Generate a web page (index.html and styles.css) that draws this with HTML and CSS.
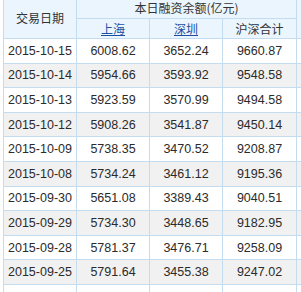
FILE: index.html
```html
<!DOCTYPE html>
<html>
<head>
<meta charset="utf-8">
<link rel="stylesheet" href="styles.css">
</head>
<body>
<div class="frame">
<table class="grid">
  <colgroup>
    <col class="c1"><col class="c2"><col class="c3"><col class="c4"><col class="c5">
  </colgroup>
  <thead>
    <tr class="h1">
      <th rowspan="2">交易日期</th>
      <th colspan="3">本日融资余额(亿元)</th>
      <th rowspan="2"></th>
    </tr>
    <tr class="h2">
      <th><a href="#">上海</a></th>
      <th><a href="#">深圳</a></th>
      <th>沪深合计</th>
    </tr>
  </thead>
  <tbody>
    <tr><td>2015-10-15</td><td>6008.62</td><td>3652.24</td><td>9660.87</td><td></td></tr>
    <tr class="alt"><td>2015-10-14</td><td>5954.66</td><td>3593.92</td><td>9548.58</td><td></td></tr>
    <tr><td>2015-10-13</td><td>5923.59</td><td>3570.99</td><td>9494.58</td><td></td></tr>
    <tr class="alt"><td>2015-10-12</td><td>5908.26</td><td>3541.87</td><td>9450.14</td><td></td></tr>
    <tr><td>2015-10-09</td><td>5738.35</td><td>3470.52</td><td>9208.87</td><td></td></tr>
    <tr class="alt"><td>2015-10-08</td><td>5734.24</td><td>3461.12</td><td>9195.36</td><td></td></tr>
    <tr><td>2015-09-30</td><td>5651.08</td><td>3389.43</td><td>9040.51</td><td></td></tr>
    <tr class="alt"><td>2015-09-29</td><td>5734.30</td><td>3448.65</td><td>9182.95</td><td></td></tr>
    <tr><td>2015-09-28</td><td>5781.37</td><td>3476.71</td><td>9258.09</td><td></td></tr>
    <tr class="alt"><td>2015-09-25</td><td>5791.64</td><td>3455.38</td><td>9247.02</td><td></td></tr>
    <tr><td></td><td></td><td></td><td></td><td></td></tr>
  </tbody>
</table>
</div>
</body>
</html>
```
FILE: styles.css
```css
html, body {
  margin: 0;
  padding: 0;
  background: #ffffff;
}
.frame {
  width: 301px;
  height: 292px;
  overflow: hidden;
  position: relative;
}
.grid {
  border-collapse: collapse;
  table-layout: fixed;
  width: 366px;
  margin-left: 3px;
  margin-top: -3px;
  font-family: "Liberation Sans", Arial, "Noto Sans CJK SC", sans-serif;
  color: #2b2b2b;
}
.c1, .c2, .c3 { width: 73px; }
.c4 { width: 74px; }
.c5 { width: 73px; }
.grid th, .grid td {
  border: 1px solid #c3dcef;
  padding: 0;
  text-align: center;
  white-space: nowrap;
  overflow: hidden;
}
.grid th {
  background: #eaf5fd;
  font-family: "Noto Sans CJK SC", "Liberation Sans", sans-serif;
  font-weight: normal;
  font-size: 12px;
  color: #333333;
  line-height: 14px;
}
.h1 th { height: 20px; }
.h2 th { height: 19px; }
.grid th a {
  color: #1c4f9f;
  text-decoration: underline;
}
.grid td {
  font-size: 12.5px;
  height: 23.6px;
  line-height: 14px;
  background: #ffffff;
}
.grid tr.alt td {
  background: #f1f1f1;
}
.grid td:last-child, .grid th:last-child {
  background: #ffffff;
}
.grid thead th:last-child {
  background: #eaf5fd;
}
```
